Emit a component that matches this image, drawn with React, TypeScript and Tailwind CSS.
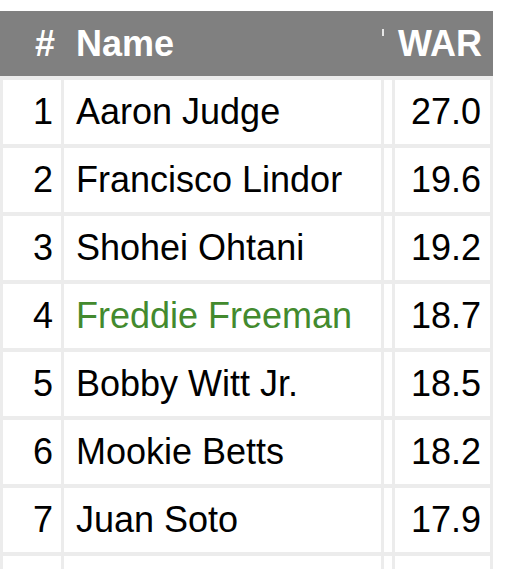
const ROWS: { rank: number; name: string; war: string; hl?: boolean }[] = [
  { rank: 1, name: 'Aaron Judge', war: '27.0' },
  { rank: 2, name: 'Francisco Lindor', war: '19.6' },
  { rank: 3, name: 'Shohei Ohtani', war: '19.2' },
  { rank: 4, name: 'Freddie Freeman', war: '18.7', hl: true },
  { rank: 5, name: 'Bobby Witt Jr.', war: '18.5' },
  { rank: 6, name: 'Mookie Betts', war: '18.2' },
  { rank: 7, name: 'Juan Soto', war: '17.9' },
  { rank: 8, name: '', war: '' },
]

const COLS = 'grid grid-cols-[58px_317px_8px_95px] gap-x-[3px] px-[3px]'

export default function App() {
  return (
    <div className="h-[569px] w-[515px] overflow-hidden bg-white pt-[11px] font-['Liberation_Sans',Arial,sans-serif]">
      <div className="w-[493px]">
        <div className={`${COLS} h-[65px] items-center bg-[#808080] text-[36px] font-bold text-white`}>
          <div className="pr-[6px] text-right">#</div>
          <div className="pl-[12px]">Name</div>
          <div className="-ml-[2px] mb-[22px] h-[7px] w-[2px] self-center bg-white/80" />
          <div className="pr-[8px] text-right">WAR</div>
        </div>
        <div className={`${COLS} gap-y-[4px] bg-[#ececec] pt-[4px] text-[36px] text-black`}>
          {ROWS.map((r) => (
            <div key={r.rank} className="contents">
              <div className="flex h-[64px] items-center justify-end bg-white pr-[8px]">{r.name ? r.rank : ''}</div>
              <div className={`flex h-[64px] items-center bg-white pl-[12px] ${r.hl ? 'text-[#438a2e]' : ''}`}>{r.name}</div>
              <div className="h-[64px] bg-white" />
              <div className="flex h-[64px] items-center justify-end bg-white pr-[9px]">{r.war}</div>
            </div>
          ))}
        </div>
      </div>
    </div>
  )
}
